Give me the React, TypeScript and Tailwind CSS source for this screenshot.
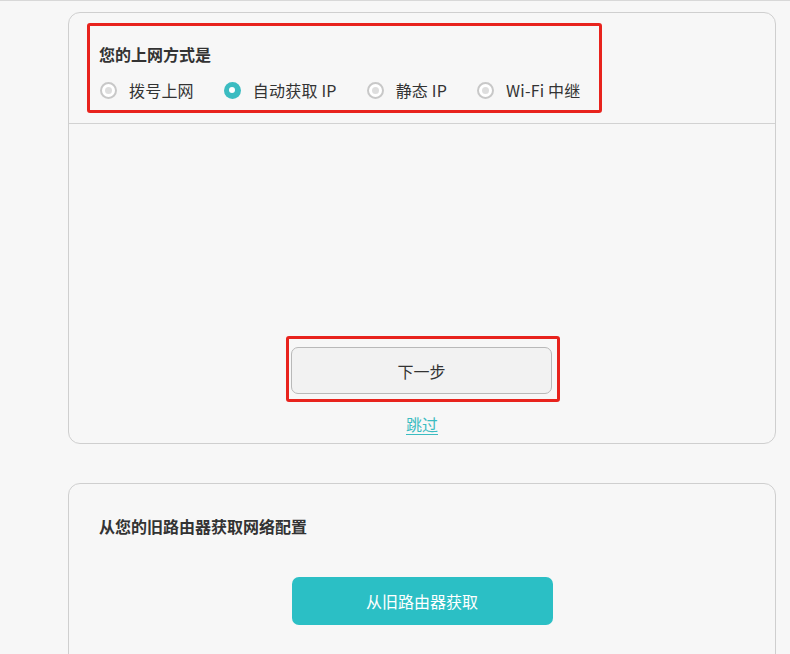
import React, { useState } from 'react';

// Opciones de conexión
const modes = ['拨号上网', '自动获取 IP', '静态 IP', 'Wi-Fi 中继'];

const Radio: React.FC<{ checked: boolean }> = ({ checked }) =>
  checked ? (
    <span className="flex h-[17px] w-[17px] items-center justify-center rounded-full bg-[#3bbcc1]">
      <span className="h-[6px] w-[6px] rounded-full bg-white" />
    </span>
  ) : (
    <span className="flex h-[17px] w-[17px] items-center justify-center rounded-full border-2 border-[#c8c8c8] bg-white">
      <span className="h-[7px] w-[7px] rounded-full bg-[#dedede]" />
    </span>
  );

export default function App() {
  const [mode, setMode] = useState(1);

  return (
    <div
      className="h-[654px] w-[790px] overflow-hidden border-t border-[#d8d8d8] bg-[#f7f7f7] text-[#333]"
      style={{ fontFamily: '"Noto Sans CJK SC", "Noto Sans", sans-serif' }}
    >
      <div className="pl-[68px] pr-[14px] pt-[11px]">
        {/* Tarjeta 1 */}
        <div className="rounded-[12px] border border-[#cfcfcf]">
          <div className="px-[18px] pb-[10px] pt-[10px]">
            <div className="h-[90px] w-[515px] rounded-[3px] border-[3px] border-[#e8231d] pl-[9px]">
              <div className="mt-[18px] h-[20px] text-[16px] font-bold leading-[20px]">您的上网方式是</div>
              <div className="mt-[16px] flex h-[20px] items-center gap-[30px] pl-px">
                {modes.map((m, i) => (
                  <button
                    key={m}
                    onClick={() => setMode(i)}
                    className="flex items-center gap-[12px] text-[16px] leading-[20px] tracking-[0.2px]"
                  >
                    <Radio checked={mode === i} />
                    <span>{m}</span>
                  </button>
                ))}
              </div>
            </div>
          </div>
          <div className="flex flex-col items-center border-t border-[#d2d2d2] pb-[9px]">
            <div className="ml-[2px] mt-[212px] h-[66px] w-[274px] rounded-[3px] border-[3px] border-[#e8231d] pl-[2px] pt-[8px]">
              <button className="flex h-[47px] w-[261px] items-center justify-center rounded-[7px] border border-[#b9b9b9] bg-[#f2f2f2] text-[16px] text-[#333]">
                下一步
              </button>
            </div>
            <a className="mt-[12px] h-[20px] text-[16px] leading-[20px] text-[#3bbcc1] underline underline-offset-[3px]">
              跳过
            </a>
          </div>
        </div>

        {/* Tarjeta 2 */}
        <div className="mt-[39px] h-[200px] rounded-[12px] border border-[#cfcfcf]">
          <div className="pl-[30px] pt-[32px] text-[16px] font-bold leading-[20px]">从您的旧路由器获取网络配置</div>
          <div className="mt-[41px] flex justify-center">
            <button className="h-[48px] w-[261px] rounded-[7px] bg-[#2bbfc5] text-[16px] text-white">从旧路由器获取</button>
          </div>
        </div>
      </div>
    </div>
  );
}
